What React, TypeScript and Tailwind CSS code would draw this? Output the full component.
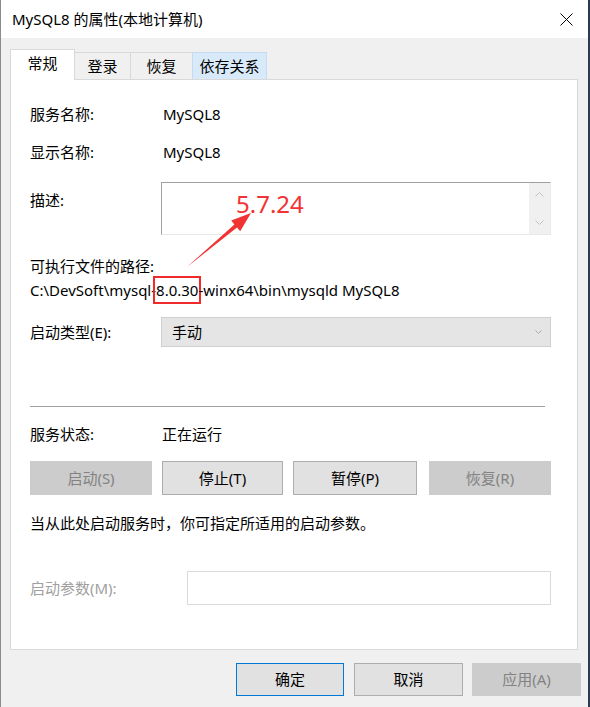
import React from "react";

const FONT = "font-['Noto_Sans','Noto_Sans_CJK_SC',sans-serif]";

function WinButton({
  label,
  width,
  disabled,
  primary,
}: {
  label: string;
  width: string;
  disabled?: boolean;
  primary?: boolean;
}) {
  return (
    <div
      className={[
        "flex items-center justify-center text-[15px] border",
        width,
        disabled
          ? "bg-[#cccccc] border-[#cccccc] text-[#838383]"
          : primary
            ? "bg-[#e1e1e1] border-[#0078d7] text-black"
            : "bg-[#e1e1e1] border-[#adadad] text-black",
      ].join(" ")}
    >
      {label}
    </div>
  );
}

function Tab({
  label,
  width,
  active,
  hover,
}: {
  label: string;
  width: string;
  active?: boolean;
  hover?: boolean;
}) {
  if (active) {
    return (
      <div
        className={`${width} h-[31px] -mb-px relative z-10 bg-white border border-b-0 border-[#d9d9d9] flex items-center justify-center text-[15px] pb-[3px]`}
      >
        {label}
      </div>
    );
  }
  return (
    <div
      className={`${width} h-[27px] -ml-px border border-b-0 flex items-center justify-center text-[15px] ${
        hover ? "bg-[#d8eaf9] border-[#c4dcf2]" : "bg-[#f0f0f0] border-[#d9d9d9]"
      }`}
    >
      {label}
    </div>
  );
}

export default function App() {
  return (
    <div
      className={`relative w-[590px] h-[707px] overflow-hidden bg-[#f0f0f0] border-l border-l-[#8c8c8c] border-r-2 border-r-[#2b3956] text-black ${FONT}`}
    >
      {/* title bar */}
      <div className="h-[38px] bg-white flex items-center justify-between pl-[11px] pr-[15px]">
        <span className="text-[15px]">MySQL8 的属性(本地计算机)</span>
        <svg width="13" height="13" viewBox="0 0 13 13" className="mt-[1px]">
          <path d="M0.5 0.5 L12.5 12.5 M12.5 0.5 L0.5 12.5" stroke="#000" strokeWidth="1" />
        </svg>
      </div>

      <div className="pt-[11px] pl-[9px]">
        {/* tabs */}
        <div className="flex items-end h-[30px]">
          <Tab label="常规" width="w-[65px]" active />
          <Tab label="登录" width="w-[57px]" />
          <Tab label="恢复" width="w-[63px]" />
          <Tab label="依存关系" width="w-[75px]" hover />
        </div>

        {/* panel */}
        <div className="w-[568px] h-[571px] bg-white border border-[#d9d9d9] pl-[19px] flex flex-col text-[15px]">
          <div className="mt-[22px] h-[24px] flex items-center">
            <span className="w-[133px]">服务名称:</span>
            <span>MySQL8</span>
          </div>
          <div className="mt-[14px] h-[24px] flex items-center">
            <span className="w-[133px]">显示名称:</span>
            <span>MySQL8</span>
          </div>
          <div className="mt-[18px] flex">
            <span className="w-[131px] h-[24px] mt-[6px] flex items-center">描述:</span>
            <div className="w-[390px] h-[53px] flex border-t border-l border-t-[#a0a0a0] border-l-[#a0a0a0] border-r border-b border-r-[#e8e8e8] border-b-[#e8e8e8]">
              <div className="flex-1" />
              <div className="w-[21px] bg-[#f0f0f0] flex flex-col items-center justify-between py-[9px]">
                <svg width="9" height="5" viewBox="0 0 9 5">
                  <path d="M0.5 4.5 L4.5 0.5 L8.5 4.5" fill="none" stroke="#c2c2c2" strokeWidth="1" />
                </svg>
                <svg width="9" height="5" viewBox="0 0 9 5">
                  <path d="M0.5 0.5 L4.5 4.5 L8.5 0.5" fill="none" stroke="#c2c2c2" strokeWidth="1" />
                </svg>
              </div>
            </div>
          </div>
          <div className="mt-[19px] h-[24px] flex items-center">可执行文件的路径:</div>
          <div className="h-[24px] flex items-center whitespace-nowrap">
            <span>C:\DevSoft\mysql-</span>
            <span className="outline-2 outline-[#f02a2a] outline-offset-[1px] -mr-[1px]">8.0.30</span>
            <span className="ml-[1px]">-winx64\bin\mysqld MySQL8</span>
          </div>
          <div className="mt-[15px] flex items-center">
            <span className="w-[131px]">启动类型(E):</span>
            <div className="w-[390px] h-[30px] bg-[#e5e5e5] border border-[#cfcfcf] flex items-center justify-between pl-[10px] pr-[8px]">
              <span>手动</span>
              <svg width="7" height="4" viewBox="0 0 7 4">
                <path d="M0.5 0.5 L3.5 3.5 L6.5 0.5" fill="none" stroke="#a8a8a8" strokeWidth="1" />
              </svg>
            </div>
          </div>
          <div className="mt-[59px] w-[515px] h-px bg-[#a0a0a0]" />
          <div className="mt-[15px] h-[24px] flex items-center">
            <span className="w-[132px]">服务状态:</span>
            <span>正在运行</span>
          </div>
          <div className="mt-[15px] h-[34px] flex">
            <WinButton label="启动(S)" width="w-[122px]" disabled />
            <div className="w-[10px]" />
            <WinButton label="停止(T)" width="w-[121px]" />
            <div className="w-[10px]" />
            <WinButton label="暂停(P)" width="w-[124px]" />
            <div className="w-[12px]" />
            <WinButton label="恢复(R)" width="w-[122px]" disabled />
          </div>
          <div className="mt-[16px] h-[24px] flex items-center">
            当从此处启动服务时，你可指定所适用的启动参数。
          </div>
          <div className="mt-[36px] flex items-center">
            <span className="w-[157px] text-[#a0a0a0]">启动参数(M):</span>
            <div className="w-[364px] h-[34px] border border-[#d9d9d9] bg-white" />
          </div>
        </div>

        {/* dialog buttons */}
        <div className="mt-[13px] h-[33px] flex pl-[226px]">
          <WinButton label="确定" width="w-[108px]" primary />
          <div className="w-[10px]" />
          <WinButton label="取消" width="w-[109px]" />
          <div className="w-[9px]" />
          <WinButton label="应用(A)" width="w-[109px]" disabled />
        </div>
      </div>

      {/* annotation overlay */}
      <div className="absolute left-[235px] top-[189px] text-[24px] leading-[30px] text-[#f23333] font-['Noto_Sans',sans-serif]">
        5.7.24
      </div>
      <svg
        className="absolute left-0 top-0 pointer-events-none"
        width="590"
        height="707"
        viewBox="0 0 590 707"
      >
        <polygon
          points="186,267 233.4,224.4 230.2,220.5 250,213 239.2,231.3 236,227.4"
          fill="#f23333"
        />
      </svg>
    </div>
  );
}
